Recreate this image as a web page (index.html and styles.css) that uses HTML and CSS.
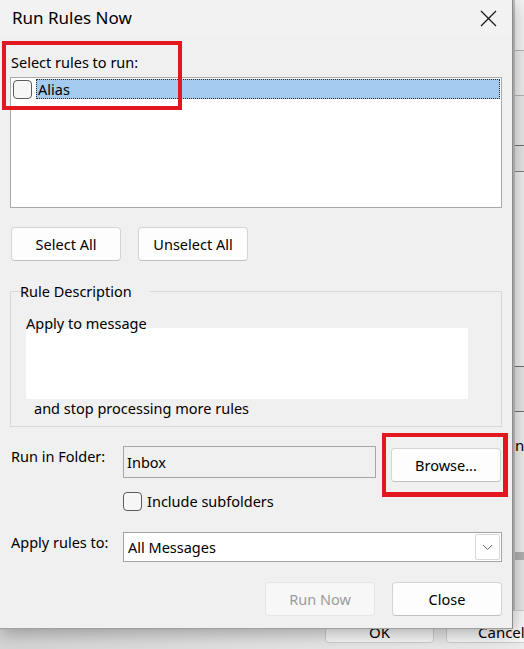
FILE: index.html
```html
<!DOCTYPE html>
<html>
<head>
<meta charset="utf-8">
<link rel="stylesheet" href="styles.css">
</head>
<body>
<div class="screen">
  <div class="backwin">
    <div class="strip">
      <div class="seg s1"></div>
      <div class="seg s2"></div>
      <div class="seg s3"></div>
      <div class="seg s4"></div>
      <div class="seg s5"></div>
      <div class="seg s6"></div>
      <div class="seg s7"><span class="peek">n</span></div>
      <div class="seg s8"></div>
      <div class="seg s9"></div>
    </div>
    <div class="backbtns">
      <div class="bbtn">OK</div>
      <div class="bbtn">Cancel</div>
    </div>
  </div>

  <div class="dialog">
    <div class="titlebar">
      <span class="title">Run Rules Now</span>
      <svg class="close" width="17" height="17" viewBox="0 0 17 17"><path d="M1 1 L16 16 M16 1 L1 16" stroke="#1a1a1a" stroke-width="1.3" fill="none"/></svg>
    </div>
    <div class="content">
      <div class="annot annot-rules"></div>
      <div class="annot annot-browse"></div>

      <div class="label lbl-select">Select rules to run:</div>
      <div class="listbox">
        <div class="rule-row">
          <span class="check"></span>
          <span class="rule-name">Alias</span>
        </div>
      </div>

      <div class="btnrow">
        <button class="btn">Select All</button>
        <button class="btn">Unselect All</button>
      </div>

      <fieldset class="group">
        <legend>Rule Description</legend>
        <div class="desc-line">Apply to message</div>
        <div class="redact"></div>
        <div class="desc-line desc-last">and stop processing more rules</div>
      </fieldset>

      <div class="formrow folder-row">
        <div class="flabel">Run in Folder:</div>
        <div class="field readonly">Inbox</div>
        <button class="btn browse">Browse...</button>
      </div>

      <div class="subrow">
        <span class="check"></span>
        <span>Include subfolders</span>
      </div>

      <div class="formrow apply-row">
        <div class="flabel">Apply rules to:</div>
        <div class="select">
          <span class="select-text">All Messages</span>
          <span class="drop">
            <svg width="11" height="7" viewBox="0 0 11 7"><path d="M1 1 L5.5 5.5 L10 1" stroke="#6b6b6b" stroke-width="1" fill="none"/></svg>
          </span>
        </div>
      </div>

      <div class="footer">
        <button class="btn disabled">Run Now</button>
        <button class="btn">Close</button>
      </div>
    </div>
  </div>
</div>
</body>
</html>
```
FILE: styles.css
```css
* { box-sizing: border-box; }
html, body { margin: 0; padding: 0; }
body {
  font-family: "Noto Sans", "Open Sans", sans-serif;
  font-size: 14.5px;
  color: #000;
  background: #e6e6e6;
}
.screen {
  display: grid;
  width: 524px;
  height: 649px;
  overflow: hidden;
}

/* background window */
.backwin {
  grid-area: 1 / 1;
  background: linear-gradient(to right, #d6d6d6, #e6e6e6 60%, #ebebeb);
  display: grid;
  grid-template-columns: 513px 11px;
  grid-template-rows: 1fr 39px;
}
.strip {
  grid-column: 2;
  grid-row: 1;
  display: flex;
  flex-direction: column;
  background: #ececec;
  border-left: 2px solid #c4c4c4;
}
.seg { flex: none; border-bottom: 1px solid #8f8f8f; }
.s1 { height: 51px; background: #f3f3f3; border-bottom-color: #b4b4b4; }
.s2 { height: 45px; border-bottom-color: #b4b4b4; }
.s3 { height: 50px; background: #e8e8e8; border-bottom-color: #707070; }
.s4 { height: 26px; background: #e4e4e4; border-bottom-color: #808080; }
.s5 { height: 195px; background: #eeeeee; border-bottom-color: #6f6f6f; }
.s6 { height: 45px; background: #e4e4e4; border-bottom-color: #6f6f6f; }
.s7 { height: 140px; background: #ececec; border-bottom: 0; overflow: hidden; }
.s8 { height: 8px; background: #b0b0b0; border-bottom: 0; }
.s9 { flex: 1; background: #e6e6e6; border-bottom: 0; }
.peek { display: block; margin-top: 24px; font-size: 15px; line-height: 18px; }
.backbtns {
  grid-column: 1 / span 2;
  grid-row: 2;
  display: flex;
  gap: 12px;
  padding-left: 325px;
}
.bbtn {
  flex: none;
  width: 109px;
  height: 33px;
  border: 1px solid #cfcfcf;
  border-radius: 4px;
  background: #f8f8f8;
  text-align: center;
  padding-top: 11px;
  line-height: 20px;
  font-size: 15px;
}
.bbtn + .bbtn { text-align: left; padding-left: 31px; }

/* dialog */
.dialog {
  grid-area: 1 / 1;
  align-self: start;
  justify-self: start;
  width: 513px;
  height: 629px;
  background: #f0f0f0;
  border-right: 1px solid #8c8c8c;
  border-bottom: 1px solid #a0a0a0;
  box-shadow: 0 4px 18px rgba(0, 0, 0, 0.32);
  display: flex;
  flex-direction: column;
  z-index: 1;
}
.titlebar {
  height: 36px;
  flex: none;
  display: flex;
  align-items: center;
  justify-content: space-between;
  padding: 0 15px 0 12px;
  background: #f2f2f2;
}
.title { font-size: 17px; line-height: 22px; }
.close { display: block; }

.content {
  position: relative;
  padding: 0 10px;
  display: flex;
  flex-direction: column;
}
.label { line-height: 20px; height: 20px; }
.lbl-select { margin-top: 16px; padding-left: 1px; }

.listbox {
  margin-top: 5px;
  height: 131px;
  border: 1px solid #a9a9a9;
  background: #fff;
  padding: 1px 1px 0 1px;
}
.rule-row { display: flex; align-items: center; height: 20px; }
.check {
  flex: none;
  width: 19px;
  height: 19px;
  border: 1px solid #5c5c5c;
  border-radius: 4px;
  background: #f6f6f6;
}
.rule-row .check { margin-left: 1px; }
.rule-name {
  flex: 1;
  margin-left: 4px;
  height: 20px;
  line-height: 18px;
  padding-left: 1px;
  background: #a3cbef;
  border: 1px dotted #2c2c2c;
}

.btnrow {
  margin-top: 19px;
  display: flex;
  gap: 17px;
  padding-left: 1px;
}
.btn {
  font: inherit;
  font-size: 14.5px;
  color: #000;
  width: 110px;
  height: 34px;
  border: 1px solid #d4d4d4;
  border-bottom-color: #c2c2c2;
  border-radius: 4px;
  background: #fdfdfd;
  padding: 0;
  margin: 0;
}

.group {
  margin: 20px 0 0 0;
  padding: 12px 15px 8px 15px;
  border: 1px solid #d9d9d9;
  min-width: 0;
}
.group legend {
  position: relative;
  left: -15px;
  margin-left: 6px;
  padding: 0 3px;
  line-height: 20px;
}
.desc-line { line-height: 20px; height: 20px; }
.redact {
  margin-top: -5px;
  width: 442px;
  height: 71px;
  background: #fff;
}
.desc-last { margin-top: -1px; padding-left: 8px; }

.formrow { display: flex; align-items: flex-start; }
.flabel { width: 113px; flex: none; line-height: 20px; padding-left: 1px; }
.folder-row { margin-top: 19px; }
.field {
  width: 253px;
  height: 32px;
  border: 1px solid #a7a7a7;
  padding: 5px 0 0 3px;
  line-height: 20px;
}
.readonly { background: #f0f0f0; }
.browse { margin-left: 15px; margin-top: 2px; }

.subrow {
  margin-top: 10px;
  padding-left: 113px;
  display: flex;
  align-items: center;
  gap: 5px;
  height: 19px;
  line-height: 19px;
}

.apply-row { margin-top: 21px; }
.select {
  width: 380px;
  height: 30px;
  border: 1px solid #a3a3a3;
  background: #fff;
  display: flex;
  align-items: center;
  justify-content: space-between;
  padding: 0 1px 0 4px;
}
.select-text { line-height: 20px; }
.drop {
  width: 25px;
  height: 26px;
  border: 1px solid #d9d9d9;
  border-radius: 2px;
  display: flex;
  align-items: center;
  justify-content: center;
}
.drop svg { display: block; }

.footer {
  margin-top: 20px;
  display: flex;
  justify-content: flex-end;
  gap: 17px;
}
.btn.disabled {
  background: #f7f7f7;
  border-color: #e6e6e6;
  color: #9b9b9b;
}

/* annotation overlays */
.annot {
  position: absolute;
  border: 4px solid #e2171f;
  z-index: 2;
}
.annot-rules { left: 2px; top: 5px; width: 180px; height: 69px; }
.annot-browse { left: 382px; top: 397px; width: 126px; height: 64px; border-width: 4px 5px 5px 4px; }
```
